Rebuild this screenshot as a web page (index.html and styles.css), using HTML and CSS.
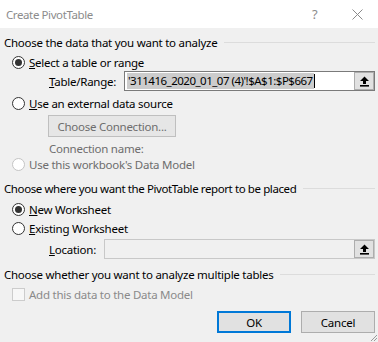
FILE: index.html
```html
<!DOCTYPE html>
<html>

<head>
	<title>Create PivotTable</title>
	<link rel="stylesheet" href="styles.css">
</head>

<body>
	<div class="dialog">
		<div class="titlebar">
			<span class="title">Create PivotTable</span>
			<span class="help">?</span>
			<svg class="close" width="11" height="11" viewBox="0 0 11 11">
				<path d="M0.5 0.5 L10.5 10.5 M10.5 0.5 L0.5 10.5" stroke="#8a8a8a" stroke-width="1" fill="none" />
			</svg>
		</div>

		<div class="content">
			<div class="heading h1"><span>Choose the data that you want to analyze</span><i class="rule"></i></div>

			<div class="row radio-row r1">
				<span class="radio checked"></span>
				<span><u>S</u>elect a table or range</span>
			</div>

			<div class="row field-row">
				<span class="field-label range-label"><u>T</u>able/Range:</span>
				<div class="refedit range">
					<div class="ref-text"><span class="sel">'311416_2020_01_07 (4)'!$A$1:$P$667</span><span class="caret"></span></div>
					<div class="ref-btn">
						<svg width="11" height="11" viewBox="0 0 11 11">
							<path d="M5.5 0.5 L10 5 L7 5 L7 8 L4 8 L4 5 L1 5 Z" fill="#000" />
							<rect x="1" y="9" width="9" height="1.6" fill="#000" />
						</svg>
					</div>
				</div>
			</div>

			<div class="row radio-row r2">
				<span class="radio"></span>
				<span><u>U</u>se an external data source</span>
			</div>

			<div class="conn-btn">Choose Connection...</div>
			<div class="row conn-name">Connection name:</div>

			<div class="row radio-row r3 disabled">
				<span class="radio"></span>
				<span>Use this workbook's Data Model</span>
			</div>

			<div class="heading h2"><span>Choose where you want the PivotTable report to be placed</span><i class="rule"></i></div>

			<div class="row radio-row r4">
				<span class="radio checked"></span>
				<span><u>N</u>ew Worksheet</span>
			</div>
			<div class="row radio-row r5">
				<span class="radio"></span>
				<span><u>E</u>xisting Worksheet</span>
			</div>

			<div class="row field-row loc-row">
				<span class="field-label loc-label"><u>L</u>ocation:</span>
				<div class="refedit location">
					<div class="ref-text empty"></div>
					<div class="ref-btn">
						<svg width="11" height="11" viewBox="0 0 11 11">
							<path d="M5.5 0.5 L10 5 L7 5 L7 8 L4 8 L4 5 L1 5 Z" fill="#000" />
							<rect x="1" y="9" width="9" height="1.6" fill="#000" />
						</svg>
					</div>
				</div>
			</div>

			<div class="heading h3"><span>Choose whether you want to analyze multiple tables</span><i class="rule"></i></div>

			<div class="row radio-row r6 disabled">
				<span class="checkbox"></span>
				<span>Add this data to the Data Model</span>
			</div>

			<div class="buttons">
				<div class="btn default">OK</div>
				<div class="btn">Cancel</div>
			</div>
		</div>

		<svg class="grip" width="6" height="6" viewBox="0 0 6 6">
			<path d="M6 0 L0 6 M6 3 L3 6" stroke="#9a9a9a" stroke-width="1" />
		</svg>
	</div>
</body>

</html>
```

FILE: styles.css
```css
* {
	box-sizing: border-box;
}

body {
	margin: 0;
	background: #f0f0f0;
	font-family: "Noto Sans", "Open Sans", sans-serif;
	font-size: 11.5px;
	letter-spacing: -0.25px;
	color: #000;
}

.dialog {
	position: relative;
	width: 378px;
	height: 342px;
	background: #f0f0f0;
	overflow: hidden;
}

.titlebar {
	height: 28px;
	background: #fff;
	display: flex;
	align-items: center;
	padding-left: 6px;
	color: #8c8c8c;
}

.title {
	flex: 1;
	letter-spacing: -0.4px;
}

.help {
	width: 40px;
	font-size: 13px;
}

.close {
	margin-right: 15px;
}

.content {
	padding: 0 3px 0 4px;
}

.row {
	display: flex;
	align-items: center;
}

.heading {
	display: flex;
	align-items: center;
	height: 18px;
	white-space: nowrap;
}

.rule {
	flex: 1;
	height: 1px;
	background: #dcdcdc;
	margin-left: 7px;
}

.h1 {
	margin-top: 5px;
}

.h2 {
	margin-top: 7px;
	letter-spacing: -0.4px;
}

.h3 {
	margin-top: 6px;
}

.radio-row {
	height: 18px;
	padding-left: 8px;
}

.r1 {
	margin-top: 2px;
}

.r2 {
	margin-top: 3px;
}

.r3 {
	height: 16px;
}

.r4 {
	margin-top: 3px;
}

.r5 {
	margin-top: 1px;
}

.r6 {
	margin-top: 2px;
}

.radio {
	width: 13px;
	height: 13px;
	border: 1px solid #333;
	border-radius: 50%;
	background: #fff;
	margin-right: 4px;
	display: flex;
	align-items: center;
	justify-content: center;
}

.radio.checked::after {
	content: "";
	width: 7px;
	height: 7px;
	border-radius: 50%;
	background: #333;
}

.checkbox {
	width: 13px;
	height: 13px;
	border: 1px solid #cccccc;
	background: #f7f7f7;
	margin-right: 4px;
}

.disabled {
	color: #6d6d6d;
}

.disabled .radio {
	border-color: #c4c4c4;
}

.r6.disabled {
	color: #8a8a8a;
}

.field-row {
	height: 20px;
}

.field-label {
	padding-left: 45px;
}

.range-label {
	width: 120px;
}

.loc-label {
	width: 100px;
}

.loc-row {
	margin-top: 2px;
}

.refedit {
	flex: 1;
	height: 20px;
	display: flex;
	border: 1px solid #7a7a7a;
	background: #fff;
}

.location {
	border-color: #c8c8c8;
}

.ref-text {
	flex: 1;
	display: flex;
	align-items: center;
	padding-left: 2px;
	white-space: nowrap;
}

.ref-text.empty {
	background: #f0f0f0;
}

.sel {
	background: #cccccc;
	padding: 0 1px;
	line-height: 16px;
	letter-spacing: -0.5px;
}

.caret {
	width: 1px;
	height: 14px;
	background: #000;
}

.ref-btn {
	width: 20px;
	background: #e1e1e1;
	border: 1px solid #adadad;
	display: flex;
	align-items: center;
	justify-content: center;
}

.conn-btn {
	margin: 3px 0 0 44px;
	width: 128px;
	height: 22px;
	border: 1px solid #bfbfbf;
	background: #e6e6e6;
	color: #6d6d6d;
	display: flex;
	align-items: center;
	justify-content: center;
}

.conn-name {
	height: 16px;
	margin-top: 3px;
	padding-left: 45px;
	color: #6d6d6d;
}

.buttons {
	display: flex;
	justify-content: flex-end;
	gap: 10px;
	margin-top: 8px;
}

.btn {
	width: 74px;
	height: 22px;
	background: #e1e1e1;
	border: 1px solid #adadad;
	display: flex;
	align-items: center;
	justify-content: center;
}

.btn.default {
	border: 2px solid #0078d7;
}

.grip {
	position: absolute;
	right: 1px;
	bottom: 1px;
}
```
